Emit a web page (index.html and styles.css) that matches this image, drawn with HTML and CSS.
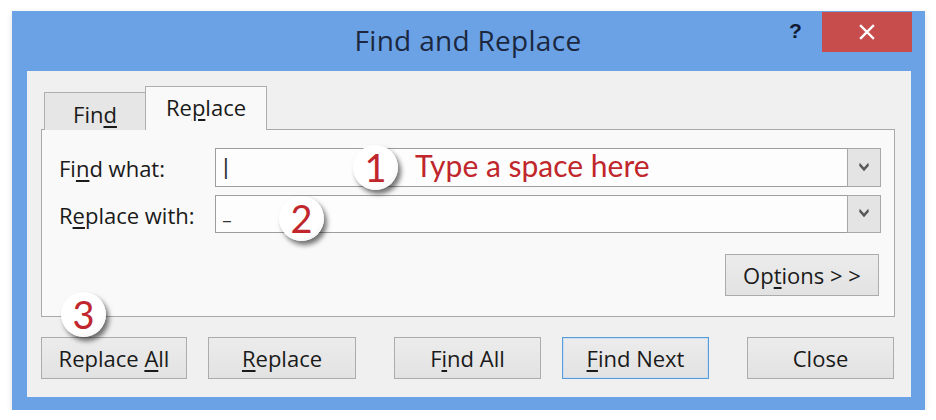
FILE: index.html
```html
<!DOCTYPE html>
<html>
<head>
<meta charset="utf-8">
<link rel="stylesheet" href="styles.css">
</head>
<body>
<div class="window">
  <div class="titlebar">
    <div class="title">Find and Replace</div>
    <div class="help">?</div>
    <div class="close-x">
      <svg width="16" height="16" viewBox="0 0 16 16"><path d="M2 2 L14 14 M14 2 L2 14" stroke="#fff" stroke-width="2.4" stroke-linecap="square"/></svg>
    </div>
  </div>
  <div class="client">
    <div class="tabs">
      <div class="tab tab-find"><span>Fin<u>d</u></span></div>
      <div class="tab tab-replace"><span>Re<u>p</u>lace</span></div>
    </div>
    <div class="panel">
      <div class="fields">
        <label class="label">Fi<u>n</u>d what:</label>
        <div class="combo"><span class="caret">|</span><span class="drop"><svg width="12" height="10" viewBox="0 0 12 10"><path d="M1.5 2 L6 7 L10.5 2" fill="none" stroke="#555" stroke-width="1.6"/><path d="M1.5 0.5 L6 5.5 L10.5 0.5" fill="none" stroke="#555" stroke-width="1.2"/></svg></span></div>
        <label class="label">R<u>e</u>place with:</label>
        <div class="combo"><span class="under">_</span><span class="drop"><svg width="12" height="10" viewBox="0 0 12 10"><path d="M1.5 2 L6 7 L10.5 2" fill="none" stroke="#555" stroke-width="1.6"/><path d="M1.5 0.5 L6 5.5 L10.5 0.5" fill="none" stroke="#555" stroke-width="1.2"/></svg></span></div>
      </div>
      <div class="options-row">
        <button class="btn btn-options"><span>Op<u>t</u>ions &gt; &gt;</span></button>
      </div>
    </div>
    <div class="buttons">
      <button class="btn"><span>Replace <u>A</u>ll</span></button>
      <button class="btn"><span><u>R</u>eplace</span></button>
      <button class="btn btn-wide-gap"><span>F<u>i</u>nd All</span></button>
      <button class="btn btn-default"><span><u>F</u>ind Next</span></button>
      <button class="btn btn-wide-gap"><span>Close</span></button>
    </div>
  </div>
  <div class="badge b1">1</div>
  <div class="hint">Type a space here</div>
  <div class="badge b2">2</div>
  <div class="badge b3">3</div>
</div>
</body>
</html>
```

FILE: styles.css
```css
* { box-sizing: border-box; }
html, body { margin: 0; padding: 0; background: #ffffff; }
body { font-family: "Open Sans", "Noto Sans", sans-serif; }

.window {
  position: relative;
  margin: 11px 0 0 12px;
  width: 913px;
  height: 399px;
  background: #6ba2e6;
  padding: 0 14px 13px 15px;
  display: flex;
  flex-direction: column;
  box-shadow: 0 2px 6px rgba(0,0,0,0.12);
}

.titlebar {
  height: 60px;
  position: relative;
  display: flex;
  align-items: center;
  justify-content: center;
}
.title {
  font-family: "Open Sans", sans-serif;
  font-size: 28px;
  color: #1b2840;
  letter-spacing: 0.3px;
  margin-top: -2px;
  margin-left: -2px;
}
.help {
  position: absolute;
  left: 762px;
  top: 8px;
  font-family: "Liberation Sans", sans-serif;
  font-weight: bold;
  font-size: 21px;
  color: #111a33;
}
.close-x {
  position: absolute;
  left: 795px;
  top: 1px;
  width: 90px;
  height: 40px;
  background: #c74d4d;
  display: flex;
  align-items: center;
  justify-content: center;
}

.client {
  flex: 1;
  background: #f0f0f0;
  padding: 15px 16px 18px 14px;
  display: flex;
  flex-direction: column;
}

.tabs {
  display: flex;
  align-items: flex-end;
  height: 44px;
  padding-left: 3px;
  position: relative;
  z-index: 2;
  margin-bottom: -1px;
}
.tab {
  font-size: 22px;
  color: #1a1a1a;
  border: 1px solid #aeaeae;
  border-bottom: none;
  display: flex;
  align-items: center;
  justify-content: center;
}
.tab u { text-underline-offset: 3px; }
.tab-find {
  width: 101px;
  height: 38px;
  background: #e6e6e6;
  border-right: none;
  padding-top: 4px;
}
.tab-replace {
  width: 122px;
  height: 44px;
  background: #f9f9f9;
  padding-bottom: 4px;
}

.panel {
  height: 188px;
  border: 1px solid #a9a9a9;
  background: #f9f9f9;
  display: flex;
  flex-direction: column;
  padding: 18px 13px 0 17px;
}
.fields {
  display: grid;
  grid-template-columns: 156px 1fr;
  row-gap: 8px;
  align-items: center;
}
.label {
  font-size: 22px;
  color: #1a1a1a;
  margin-top: 1px;
}
.label u { text-underline-offset: 3px; }
.combo {
  height: 39px;
  background: #fdfdfd;
  border: 1px solid #9d9d9d;
  display: flex;
  align-items: center;
  justify-content: space-between;
  padding-left: 7px;
}
.combo + .label + .combo { height: 38px; }
.caret {
  font-family: "Liberation Sans", sans-serif;
  font-size: 22px;
  color: #333;
  font-weight: 300;
  margin-top: -2px;
}
.under {
  font-size: 18px;
  color: #333;
  margin-top: -4px;
}
.drop {
  width: 34px;
  height: calc(100% + 2px);
  margin-right: -1px;
  background: #e4e4e4;
  border: 1px solid #a8a8a8;
  display: flex;
  align-items: center;
  justify-content: center;
}

.options-row {
  display: flex;
  justify-content: flex-end;
  margin-top: 21px;
  padding-right: 2px;
}

.btn {
  font-family: "Open Sans", "Noto Sans", sans-serif;
  font-size: 22px;
  color: #1a1a1a;
  background: linear-gradient(#ececec, #e2e2e2);
  border: 1px solid #acacac;
  height: 42px;
  width: 147px;
  padding: 0;
  display: flex;
  align-items: center;
  justify-content: center;
}
.btn u { text-underline-offset: 3px; }
.btn-options { width: 154px; }
.btn-default { border-color: #5a9bd8; box-shadow: inset 0 0 0 1px #c9def3; }

.buttons {
  display: flex;
  margin-top: 20px;
  gap: 21px;
}
.buttons .btn:first-child { width: 146px; }
.buttons .btn:nth-child(2) { width: 148px; }
.btn-wide-gap { margin-left: 17px; }

.badge {
  position: absolute;
  width: 45px;
  height: 45px;
  border-radius: 50%;
  background: radial-gradient(circle at 40% 35%, #ffffff 60%, #ececec 100%);
  box-shadow: 3px 4px 5px rgba(0,0,0,0.55);
  color: #c0262c;
  font-family: "Lato", "Open Sans", sans-serif;
  font-size: 38px;
  line-height: 45px;
  text-align: center;
}
.b1 { left: 341px; top: 134px; }
.b2 { left: 267px; top: 185px; }
.b3 { left: 49px; top: 281px; }

.hint {
  position: absolute;
  left: 403px;
  top: 136px;
  font-family: "Lato", "Open Sans", sans-serif;
  font-size: 30px;
  color: #c0262c;
  text-shadow: 0 0 3px #fff, 0 0 6px #fff;
}
```
